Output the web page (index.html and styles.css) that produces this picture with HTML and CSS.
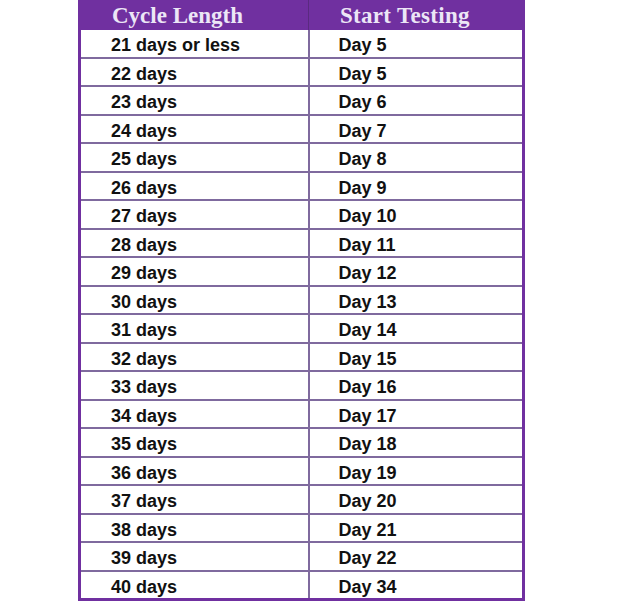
FILE: index.html
```html
<!DOCTYPE html>
<html>
<head>
<meta charset="utf-8">
<link rel="stylesheet" href="styles.css">
</head>
<body>
<table class="chart">
<thead>
<tr><th>Cycle Length</th><th>Start Testing</th></tr>
</thead>
<tbody>
<tr><td>21 days or less</td><td>Day 5</td></tr>
<tr><td>22 days</td><td>Day 5</td></tr>
<tr><td>23 days</td><td>Day 6</td></tr>
<tr><td>24 days</td><td>Day 7</td></tr>
<tr><td>25 days</td><td>Day 8</td></tr>
<tr><td>26 days</td><td>Day 9</td></tr>
<tr><td>27 days</td><td>Day 10</td></tr>
<tr><td>28 days</td><td>Day 11</td></tr>
<tr><td>29 days</td><td>Day 12</td></tr>
<tr><td>30 days</td><td>Day 13</td></tr>
<tr><td>31 days</td><td>Day 14</td></tr>
<tr><td>32 days</td><td>Day 15</td></tr>
<tr><td>33 days</td><td>Day 16</td></tr>
<tr><td>34 days</td><td>Day 17</td></tr>
<tr><td>35 days</td><td>Day 18</td></tr>
<tr><td>36 days</td><td>Day 19</td></tr>
<tr><td>37 days</td><td>Day 20</td></tr>
<tr><td>38 days</td><td>Day 21</td></tr>
<tr><td>39 days</td><td>Day 22</td></tr>
<tr><td>40 days</td><td>Day 34</td></tr>
</tbody>
</table>
</body>
</html>
```
FILE: styles.css
```css
html, body {
  margin: 0;
  padding: 0;
  background: #ffffff;
}
body {
  width: 640px;
  height: 604px;
  overflow: hidden;
}
.chart {
  margin-left: 78px;
  width: 447px;
  border-collapse: collapse;
  border: 3px solid #7030a0;
  border-top: none;
  table-layout: fixed;
}
.chart th {
  height: 29px;
  padding: 1px 0 0 31px;
  background: #7030a0;
  color: #ece6f6;
  font-family: "Liberation Serif", "DejaVu Serif", serif;
  font-weight: bold;
  font-size: 23px;
  text-align: left;
  line-height: 29px;
  border-left: 1px solid #5a2a80;
}
.chart th:first-child {
  width: 196px;
  border-left: none;
}
.chart th + th {
  letter-spacing: 0.3px;
}
.chart td {
  height: 22.5px;
  padding: 4px 0 0 30px;
  font-family: "Liberation Sans", Arial, sans-serif;
  font-weight: bold;
  font-size: 18px;
  color: #111111;
  line-height: 22.5px;
  border-top: 2px solid #7f6a9e;
  border-left: 2px solid #7f6a9e;
}
.chart td + td {
  padding-left: 29px;
}
.chart td:first-child {
  border-left: none;
}
.chart tbody tr:first-child td {
  border-top: none;
}
```
